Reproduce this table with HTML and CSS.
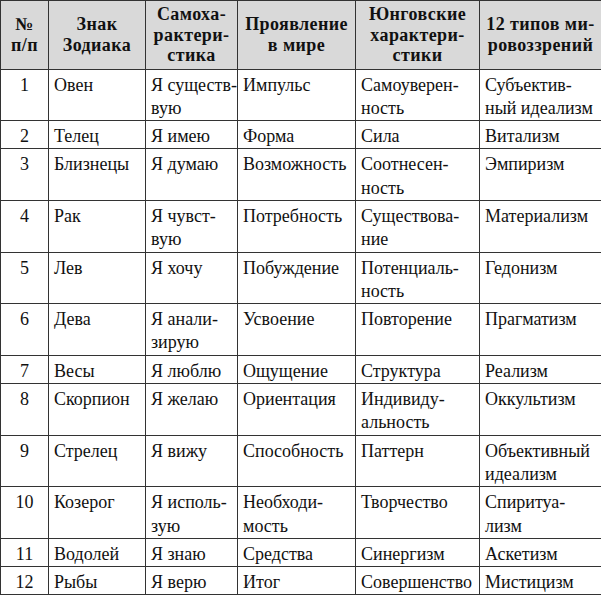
FILE: index.html
```html
<!DOCTYPE html>
<html lang="ru">
<head>
<meta charset="utf-8">
<title>Зодиак</title>
<link rel="stylesheet" href="styles.css">
</head>
<body>
<table class="zodiac">
  <colgroup>
    <col class="c-num">
    <col class="c-sign">
    <col class="c-self">
    <col class="c-world">
    <col class="c-jung">
    <col class="c-view">
  </colgroup>
  <thead>
    <tr>
      <th>№<br>п/п</th>
      <th>Знак<br>Зодиака</th>
      <th>Самоха-<br>рактери-<br>стика</th>
      <th>Проявление<br>в мире</th>
      <th>Юнговские<br>характери-<br>стики</th>
      <th>12 типов ми-<br>ровоззрений</th>
    </tr>
  </thead>
  <tbody>
    <tr><td class="num">1</td><td>Овен</td><td>Я существ-<br>вую</td><td>Импульс</td><td>Самоуверен-<br>ность</td><td>Субъектив-<br>ный идеализм</td></tr>
    <tr><td class="num">2</td><td>Телец</td><td>Я имею</td><td>Форма</td><td>Сила</td><td>Витализм</td></tr>
    <tr><td class="num">3</td><td>Близнецы</td><td>Я думаю</td><td>Возможность</td><td>Соотнесен-<br>ность</td><td>Эмпиризм</td></tr>
    <tr><td class="num">4</td><td>Рак</td><td>Я чувст-<br>вую</td><td>Потребность</td><td>Существова-<br>ние</td><td>Материализм</td></tr>
    <tr><td class="num">5</td><td>Лев</td><td>Я хочу</td><td>Побуждение</td><td>Потенциаль-<br>ность</td><td>Гедонизм</td></tr>
    <tr><td class="num">6</td><td>Дева</td><td>Я анали-<br>зирую</td><td>Усвоение</td><td>Повторение</td><td>Прагматизм</td></tr>
    <tr><td class="num">7</td><td>Весы</td><td>Я люблю</td><td>Ощущение</td><td>Структура</td><td>Реализм</td></tr>
    <tr><td class="num">8</td><td>Скорпион</td><td>Я желаю</td><td>Ориентация</td><td>Индивиду-<br>альность</td><td>Оккультизм</td></tr>
    <tr><td class="num">9</td><td>Стрелец</td><td>Я вижу</td><td>Способность</td><td>Паттерн</td><td>Объективный<br>идеализм</td></tr>
    <tr><td class="num">10</td><td>Козерог</td><td>Я исполь-<br>зую</td><td>Необходи-<br>мость</td><td>Творчество</td><td>Спиритуа-<br>лизм</td></tr>
    <tr><td class="num">11</td><td>Водолей</td><td>Я знаю</td><td>Средства</td><td>Синергизм</td><td>Аскетизм</td></tr>
    <tr><td class="num">12</td><td>Рыбы</td><td>Я верю</td><td>Итог</td><td>Совершенство</td><td>Мистицизм</td></tr>
  </tbody>
</table>
</body>
</html>
```
FILE: styles.css
```css
html, body {
  margin: 0;
  padding: 0;
  background: #ffffff;
}

.zodiac {
  width: 601px;
  table-layout: fixed;
  border-collapse: collapse;
  color: #111111;
}

.c-num { width: 48px; }
.c-sign { width: 97px; }
.c-self { width: 92px; }
.c-world { width: 118px; }
.c-jung { width: 124px; }
.c-view { width: 122px; }

.zodiac th,
.zodiac td {
  font-family: "Liberation Serif", serif;
  font-size: 18px;
  border: 1.5px solid #333333;
  white-space: nowrap;
}

.zodiac th {
  background: #d9d9d9;
  font-weight: bold;
  text-align: center;
  vertical-align: middle;
  line-height: 20.5px;
  padding: 3px 2px 3px 2px;
  letter-spacing: 0.4px;
  height: 61px;
}

.zodiac td {
  text-align: left;
  vertical-align: top;
  line-height: 23.3px;
  padding: 4px 2px 0 5px;
}

.zodiac td.num {
  text-align: center;
  padding-left: 2px;
}
```
